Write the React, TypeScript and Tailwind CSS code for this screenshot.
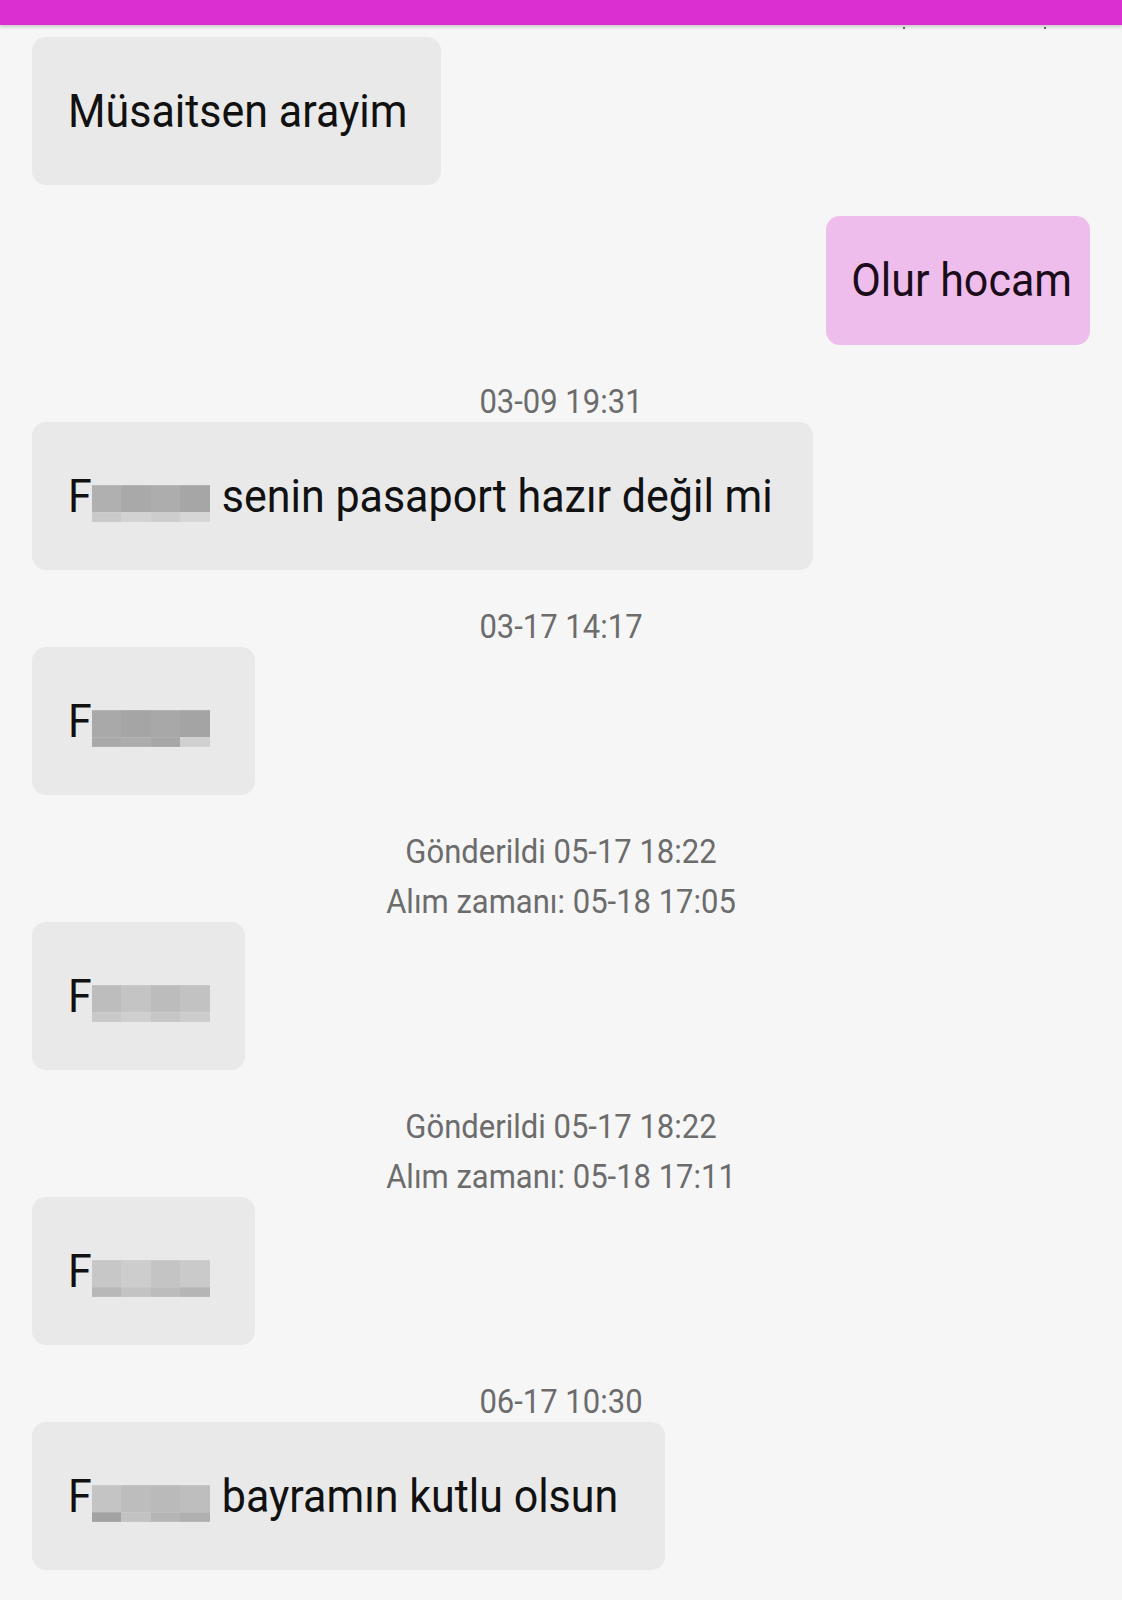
import React from "react";

type Msg =
  | { kind: "in"; text?: string; cells?: string[][]; width?: string }
  | { kind: "out"; text: string }
  | { kind: "time"; lines: string[] };

// pixelated name, drawn as a small mosaic of grey cells
const Blur = ({ cells }: { cells: string[][] }) => {
  return (
    <span className="inline-flex flex-col w-[118px] h-[34px] align-baseline mr-[12px]">
      {cells.map((row, i) => (
        <span key={i} className={`flex ${i === 0 ? "h-[25px]" : "h-[9px]"}`}>
          {row.map((c, j) => (
            <span key={j} className="flex-1" style={{ backgroundColor: c }} />
          ))}
        </span>
      ))}
    </span>
  );
};

const messages: Msg[] = [
  { kind: "in", text: "Müsaitsen arayim" },
  { kind: "out", text: "Olur hocam" },
  { kind: "time", lines: ["03-09 19:31"] },
  {
    kind: "in",
    width: "w-[781px]",
    text: "senin pasaport hazır değil mi",
    cells: [
      ["#b0b0b0", "#a9a9a9", "#adadad", "#a6a6a6"],
      ["#c9c9c9", "#d2d2d2", "#cdcdcd", "#d6d6d6"],
    ],
  },
  { kind: "time", lines: ["03-17 14:17"] },
  {
    kind: "in",
    width: "w-[223px]",
    cells: [
      ["#a9a9a9", "#a5a5a5", "#a8a8a8", "#a4a4a4"],
      ["#a9a9a9", "#acacac", "#a7a7a7", "#d0d0d0"],
    ],
  },
  { kind: "time", lines: ["Gönderildi 05-17 18:22", "Alım zamanı: 05-18 17:05"] },
  {
    kind: "in",
    width: "w-[213px]",
    cells: [
      ["#bdbdbd", "#c4c4c4", "#bcbcbc", "#c2c2c2"],
      ["#c9c9c9", "#cfcfcf", "#c6c6c6", "#cccccc"],
    ],
  },
  { kind: "time", lines: ["Gönderildi 05-17 18:22", "Alım zamanı: 05-18 17:11"] },
  {
    kind: "in",
    width: "w-[223px]",
    cells: [
      ["#c7c7c7", "#cdcdcd", "#c4c4c4", "#cacaca"],
      ["#b8b8b8", "#c3c3c3", "#bcbcbc", "#b5b5b5"],
    ],
  },
  { kind: "time", lines: ["06-17 10:30"] },
  {
    kind: "in",
    width: "w-[633px]",
    text: "bayramın kutlu olsun",
    cells: [
      ["#c4c4c4", "#bdbdbd", "#bababa", "#bebebe"],
      ["#a3a3a3", "#c2c2c2", "#b5b5b5", "#b0b0b0"],
    ],
  },
];

export default function App() {
  return (
    <div className="min-h-[1600px] w-[1122px] bg-[#f6f6f6] font-['Roboto',sans-serif] overflow-hidden">
      <div className="h-[25px] bg-[#dc2fd1] shadow-[0_2px_3px_rgba(0,0,0,0.18)]" />
      <div className="flex h-[4px] items-end">
        <span className="ml-[903px] w-[2px] h-[2px] bg-[#333] rounded-full" />
        <span className="ml-[139px] w-[2px] h-[2px] bg-[#333] rounded-full" />
      </div>
      <div className="flex flex-col px-[32px] pt-[8px]">
        {messages.map((m, i) => {
          if (m.kind === "time") {
            return (
              <div key={i} className="mt-[32px] -mb-[5px] flex flex-col items-center text-[31px] leading-[50px] text-[#6c6c6c]">
                {m.lines.map((l) => (
                  <span key={l} className="inline-block scale-y-[1.08]">{l}</span>
                ))}
              </div>
            );
          }
          if (m.kind === "out") {
            return (
              <div key={i} className="mt-[31px] self-end h-[129px] flex items-center pl-[25px] pr-[18px] rounded-[14px] bg-[#efbdec] text-[43px] text-[#1b0c1a]">
                <span className="inline-block scale-y-[1.08]">{m.text}</span>
              </div>
            );
          }
          return (
            <div
              key={i}
              className={`self-start h-[148px] flex items-center pl-[36px] pr-[34px] rounded-[14px] bg-[#e9e9e9] text-[43px] text-[#111] whitespace-nowrap ${m.width ?? ""}`}
            >
              <span className="inline-block scale-y-[1.08]">
                {m.cells && (
                  <>
                    F
                    <Blur cells={m.cells} />
                  </>
                )}
                {m.text}
              </span>
            </div>
          );
        })}
      </div>
    </div>
  );
}
